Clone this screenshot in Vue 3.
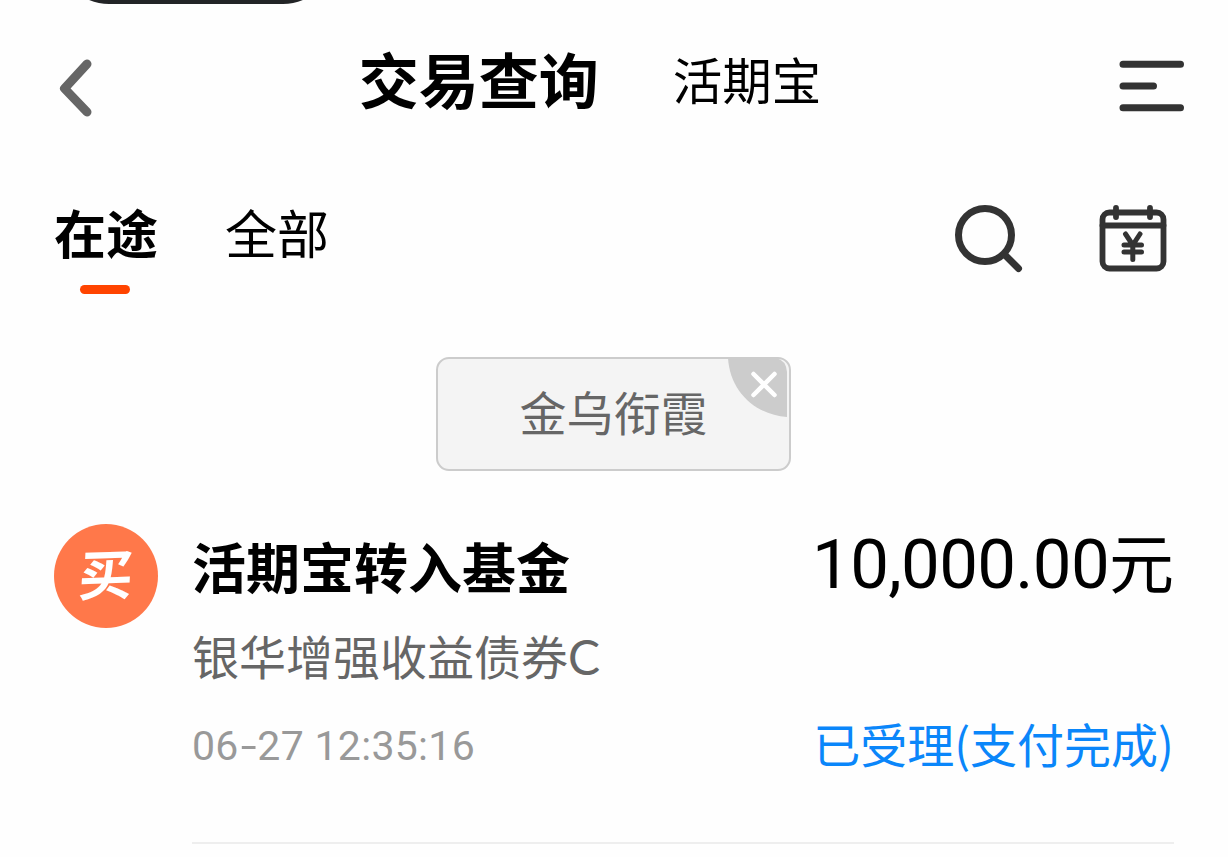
<template>
  <div class="page">
    <div class="status-pill" />

    <header class="header">
      <svg class="header__back" viewBox="0 0 36 60" aria-hidden="true">
        <path d="M29 6 L6.500 30.500 L29 54" />
      </svg>
      <nav class="header__titles">
        <h1 class="header__title">交易查询</h1>
        <span class="header__link">活期宝</span>
      </nav>
      <svg class="header__menu" viewBox="0 0 66 54" aria-hidden="true">
        <path d="M4 5.200H61.500M4 27H34.500M4 48.800H61.500" />
      </svg>
    </header>

    <div class="toolbar">
      <div class="tabs">
        <span
          v-for="tab in tabs"
          :key="tab"
          class="tabs__item"
          :class="{ 'tabs__item--active': tab === activeTab }"
          @click="activeTab = tab"
        >
          {{ tab }}
        </span>
      </div>
      <div class="toolbar__icons">
        <svg class="icon-search" viewBox="0 0 70 70" aria-hidden="true">
          <circle cx="31" cy="31" r="26.500" />
          <path d="M50.500 50.500 L64.500 64.500" />
        </svg>
        <svg class="icon-calendar" viewBox="0 0 68 70" aria-hidden="true">
          <rect x="3.500" y="8.500" width="61" height="56" rx="7" />
          <path d="M3.500 21.500H64.500" />
          <path d="M17 4V13M51 4V13" />
          <path class="icon-calendar__yen" d="M26.500 30L33.800 41L41 30M25 41H42.500M25 48H42.500M33.800 41V55.500" />
        </svg>
      </div>
    </div>

    <div class="filter">
      <div v-if="showChip" class="chip">
        <span class="chip__text">金乌衔霞</span>
        <svg class="chip__close" viewBox="0 0 60 60" @click="showChip = false">
          <path class="chip__corner" d="M0 0H48Q58 2 59 14V59C28 57 2 34 0 0Z" />
          <path class="chip__cross" d="M25.500 16L46.500 37M46.500 16L25.500 37" />
        </svg>
      </div>
    </div>

    <article v-for="item in records" :key="item.time" class="record">
      <div class="record__badge"><span>{{ item.badge }}</span></div>
      <div class="record__body">
        <div class="record__row record__row--main">
          <h2 class="record__title">{{ item.title }}</h2>
          <p class="record__amount"><span class="record__number">{{ item.amount }}</span>元</p>
        </div>
        <p class="record__fund">{{ item.fund }}<span class="record__class">{{ item.shareClass }}</span></p>
        <div class="record__row">
          <time class="record__time">{{ item.month }}<span class="record__dash">-</span>{{ item.day }} {{ item.time }}</time>
          <span class="record__status">{{ item.status }}</span>
        </div>
      </div>
    </article>
  </div>
</template>

<script setup>
import { ref } from 'vue'

const tabs = ['在途', '全部']
const activeTab = ref('在途')
const showChip = ref(true)

const records = [
  {
    badge: '买',
    title: '活期宝转入基金',
    amount: '10,000.00',
    fund: '银华增强收益债券',
    shareClass: 'C',
    month: '06',
    day: '27',
    time: '12:35:16',
    status: '已受理(支付完成)'
  }
]
</script>

<style>
body {
  margin: 0;
  background: #fefefe;
}
</style>

<style scoped>
.page {
  position: relative;
  box-sizing: border-box;
  width: 1228px;
  height: 857px;
  overflow: hidden;
  background: #fefefe;
  color: #000;
  font-family: "Noto Sans CJK SC", sans-serif;
}

h1,
h2,
p {
  margin: 0;
}

svg {
  display: block;
  fill: none;
  stroke: #333;
  stroke-linecap: round;
  stroke-linejoin: round;
}

.status-pill {
  position: absolute;
  top: -100px;
  left: 57px;
  width: 278px;
  height: 104px;
  border-radius: 52px;
  background: #222426;
}

.header {
  display: flex;
  align-items: flex-start;
  justify-content: space-between;
  height: 190px;
  padding: 0 43px 0 58px;
  box-sizing: border-box;
}

.header__back {
  width: 36px;
  height: 60px;
  margin-top: 58px;
  stroke: #666;
  stroke-width: 9;
}

.header__titles {
  display: flex;
  align-items: center;
  height: 156px;
  gap: 74px;
  margin-left: -33px;
}

.header__title {
  font-size: 60px;
  line-height: 80px;
  font-weight: 700;
}

.header__link {
  padding-top: 2px;
  font-size: 49.5px;
  line-height: 80px;
}

.header__menu {
  width: 66px;
  height: 54px;
  margin-top: 59px;
  stroke-width: 7;
}

.toolbar {
  display: flex;
  justify-content: space-between;
  height: 167px;
  padding: 0 61px 0 54px;
}

.tabs {
  display: flex;
  gap: 67px;
}

.tabs__item {
  display: flex;
  flex-direction: column;
  align-items: center;
  height: 104px;
  font-size: 52px;
  line-height: 84px;
}

.tabs__item--active {
  font-weight: 700;
}

.tabs__item--active::after {
  content: "";
  width: 50px;
  height: 9px;
  margin: 11px 2px 0 0;
  border-radius: 5px;
  background: #ff4400;
}

.toolbar__icons {
  display: flex;
  gap: 75px;
  padding-top: 14px;
}

.icon-search {
  width: 70px;
  height: 70px;
  stroke-width: 7;
}

.icon-calendar {
  width: 68px;
  height: 70px;
  stroke-width: 5.8;
}

.icon-calendar__yen {
  stroke-width: 5;
}

.filter {
  display: flex;
  justify-content: center;
  height: 167px;
  padding-right: 1px;
}

.chip {
  position: relative;
  box-sizing: border-box;
  width: 355px;
  height: 114px;
  border: 2px solid #ccc;
  border-radius: 13px;
  background: #f4f4f4;
  text-align: center;
}

.chip__text {
  color: #666;
  font-size: 47px;
  line-height: 103px;
}

.chip__close {
  position: absolute;
  top: -1px;
  right: 1px;
  width: 60px;
  height: 60px;
}

.chip__corner {
  fill: #ccc;
  stroke: none;
}

.chip__cross {
  stroke: #fff;
  stroke-width: 4.5;
}

.record {
  display: flex;
  gap: 34px;
  padding: 0 54px;
}

.record__badge {
  display: flex;
  flex: none;
  align-items: center;
  justify-content: center;
  width: 104px;
  height: 104px;
  border-radius: 50%;
  background: #ff784a;
  color: #fff;
  font-size: 54px;
  font-weight: 700;
  line-height: 96px;
}

.record__badge span {
  transform: translateY(-4px) skewX(-5deg) rotate(-2deg);
}

.record__body {
  flex: 1;
  height: 318px;
  border-bottom: 2px solid #eee;
}

.record__row {
  display: flex;
  justify-content: space-between;
}

.record__row--main {
  height: 88px;
}

.record__title {
  font-size: 54px;
  font-weight: 700;
  line-height: 84px;
}

.record__amount {
  font-size: 65px;
  line-height: 72px;
}

.record__number {
  font-family: Roboto, sans-serif;
  font-size: 69px;
  letter-spacing: -0.7px;
}

.record__fund {
  height: 88px;
  color: #666;
  font-size: 47px;
  line-height: 86px;
}

.record__class {
  font-family: Lato, sans-serif;
  font-size: 48px;
}

.record__time {
  color: #999;
  font-family: Roboto, sans-serif;
  font-size: 41px;
  letter-spacing: 0.3px;
  line-height: 92px;
}

.record__dash {
  display: inline-block;
  margin: 0 3px 0 4px;
  transform: scaleX(1.4);
}

.record__status {
  color: #0a86fa;
  font-size: 47px;
  line-height: 86px;
}
</style>
